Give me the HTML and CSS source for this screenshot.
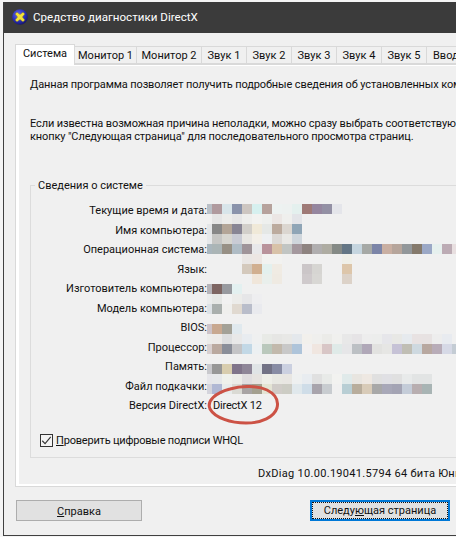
FILE: index.html
```html
<!DOCTYPE html>
<html lang="ru">
<head>
<meta charset="utf-8">
<title>Средство диагностики DirectX</title>
<link rel="stylesheet" href="styles.css">
</head>
<body>
<div class="window">
  <header class="titlebar">
    <svg class="app-icon" viewBox="0 0 16 16" width="16" height="16" aria-hidden="true">
      <defs>
        <radialGradient id="orb" cx="40%" cy="35%" r="70%">
          <stop offset="0" stop-color="#6a6ee8"/>
          <stop offset="0.6" stop-color="#2a2fb8"/>
          <stop offset="1" stop-color="#14145e"/>
        </radialGradient>
      </defs>
      <circle cx="8" cy="8" r="7.8" fill="url(#orb)"/>
      <path d="M3.2 5 5 3.2 8 5.6 11 3.2 12.8 5 10.4 8 12.8 11 11 12.8 8 10.4 5 12.8 3.2 11 5.6 8Z" fill="#f3e23a" stroke="#8a7a10" stroke-width=".4"/>
    </svg>
    <span class="title-text">Средство диагностики DirectX</span>
  </header>

  <nav class="tabs">
    <div class="tab tab-active">Система</div>
    <div class="tab tab-monitor-1">Монитор 1</div>
    <div class="tab tab-monitor-2">Монитор 2</div>
    <div class="tab tab-sound">Звук 1</div>
    <div class="tab tab-sound">Звук 2</div>
    <div class="tab tab-sound">Звук 3</div>
    <div class="tab tab-sound">Звук 4</div>
    <div class="tab tab-sound">Звук 5</div>
    <div class="tab tab-input">Ввод</div>
  </nav>

  <section class="panel">
    <div class="panel-inner">
      <p class="intro intro-first">Данная программа позволяет получить подробные сведения об установленных ком</p>
      <p class="intro intro-second">Если известна возможная причина неполадки, можно сразу выбрать соответствую<br>кнопку "Следующая страница" для последовательного просмотра страниц.</p>

      <fieldset class="group">
        <legend class="group-title">Сведения о системе</legend>
        <div class="info">
          <div class="label">Текущие время и дата:</div><div class="value"></div>
          <div class="label">Имя компьютера:</div><div class="value"></div>
          <div class="label">Операционная система:</div><div class="value"></div>
          <div class="label">Язык:</div><div class="value"></div>
          <div class="label">Изготовитель компьютера:</div><div class="value"></div>
          <div class="label">Модель компьютера:</div><div class="value"></div>
          <div class="label">BIOS:</div><div class="value"></div>
          <div class="label">Процессор:</div><div class="value"></div>
          <div class="label">Память:</div><div class="value"></div>
          <div class="label">Файл подкачки:</div><div class="value"></div>
          <div class="label">Версия DirectX:</div><div class="value">DirectX 12</div>

          <svg class="mosaic" width="249" height="190" aria-hidden="true">
            <g transform="translate(0 0)">
              <rect x="-5" fill="#b9bfc6"/><rect x="5" fill="#b09a9e"/><rect x="15" fill="#d8e5ea"/><rect x="25" fill="#8a93ab"/><rect x="35" fill="#cdc6c1"/><rect x="45" fill="#d6f0ef"/><rect x="55" fill="#b6a29c"/><rect x="65" fill="#edf2f1"/><rect x="75" fill="#edf1f0"/><rect x="85" fill="#e4f0ee"/><rect x="95" fill="#9f7a77"/><rect x="105" fill="#95869f"/><rect x="115" fill="#9390a4"/><rect x="125" fill="#e4e5ea"/>
            </g>
            <g transform="translate(0 10)">
              <rect x="5" fill="#e5e5e5"/><rect x="15" fill="#ececea"/><rect x="25" fill="#e6e6e6"/><rect x="35" fill="#eeeeec"/><rect x="45" fill="#f2f2f0"/><rect x="55" fill="#eef0ee"/><rect x="65" fill="#ebe6e4"/><rect x="75" fill="#efefed"/><rect x="85" fill="#e3e4e8"/>
            </g>
            <g transform="translate(0 20)">
              <rect x="-5" fill="#e4e6e8"/><rect x="5" fill="#878787"/><rect x="15" fill="#b3a597"/><rect x="25" fill="#888594"/><rect x="35" fill="#d2cfca"/><rect x="45" fill="#f0e9d8"/><rect x="55" fill="#e5e8e6"/><rect x="65" fill="#bcab9e"/><rect x="75" fill="#dbd6d0"/><rect x="85" fill="#8fa5b6"/>
            </g>
            <g transform="translate(0 30)">
              <rect x="-5" fill="#e6e8ea"/><rect x="5" fill="#c6c6c4"/><rect x="15" fill="#d6d5cf"/><rect x="25" fill="#c9cbd4"/><rect x="35" fill="#e8e6e2"/><rect x="45" fill="#f3efe8"/><rect x="55" fill="#eef0f2"/><rect x="65" fill="#dcd9d6"/><rect x="75" fill="#e9e8e5"/><rect x="85" fill="#cfd6dc"/>
            </g>
            <g transform="translate(0 40)">
              <rect x="-5" fill="#aab6bd"/><rect x="5" fill="#abb5b6"/><rect x="15" fill="#979085"/><rect x="25" fill="#afbcc5"/><rect x="35" fill="#9f9499"/><rect x="45" fill="#e8e8ea"/><rect x="55" fill="#b9939b"/><rect x="65" fill="#d8c2a8"/><rect x="75" fill="#c1c5c3"/><rect x="85" fill="#a4989e"/><rect x="95" fill="#8e8380"/><rect x="105" fill="#b0aeaf"/><rect x="115" fill="#aeaca2"/><rect x="125" fill="#858a86"/><rect x="135" fill="#647685"/><rect x="145" fill="#c5d5df"/><rect x="155" fill="#a6a9a6"/><rect x="165" fill="#7c85a8"/><rect x="175" fill="#c9afa2"/><rect x="185" fill="#b6a59b"/><rect x="195" fill="#92979a"/><rect x="205" fill="#857a6c"/><rect x="215" fill="#9ba8c6"/><rect x="225" fill="#e6f0ee"/><rect x="235" fill="#bcabb4"/><rect x="245" fill="#e8dfe0"/>
            </g>
            <g transform="translate(0 50)">
              <rect x="35" fill="#e9e6e4"/><rect x="45" fill="#ece6e3"/><rect x="55" fill="#f2f2f0"/><rect x="65" fill="#f2f2f0"/><rect x="135" fill="#efefe8"/>
            </g>
            <g transform="translate(0 60)">
              <rect x="35" fill="#d4c9bc"/><rect x="45" fill="#d1af90"/><rect x="55" fill="#e3f0ee"/><rect x="65" fill="#f0ebe3"/><rect x="95" fill="#cbc6c8"/><rect x="105" fill="#d6d5d2"/><rect x="135" fill="#ddc6aa"/>
            </g>
            <g transform="translate(0 70)">
              <rect x="45" fill="#f0e6da"/><rect x="55" fill="#e9efec"/><rect x="65" fill="#efeae2"/><rect x="95" fill="#cfcacc"/><rect x="105" fill="#d8d7d4"/><rect x="135" fill="#dcd2c8"/>
            </g>
            <g transform="translate(0 80)">
              <rect x="-5" fill="#b5b3b8"/><rect x="5" fill="#7d6562"/><rect x="15" fill="#989a9f"/><rect x="25" fill="#e3f0f0"/>
            </g>
            <g transform="translate(0 90)">
              <rect x="-5" fill="#eaecec"/><rect x="5" fill="#e5e7e5"/><rect x="15" fill="#f1f1f1"/><rect x="25" fill="#ececea"/><rect x="35" fill="#e6e6e8"/><rect x="45" fill="#eeeef0"/>
            </g>
            <g transform="translate(0 100)">
              <rect x="-5" fill="#dde2e6"/><rect x="5" fill="#a9afad"/><rect x="15" fill="#efefed"/><rect x="25" fill="#e0d9d0"/><rect x="35" fill="#b9bdca"/><rect x="45" fill="#e9eaee"/>
            </g>
            <g transform="translate(0 120)">
              <rect x="-5" fill="#cdc3c8"/><rect x="5" fill="#c8a890"/><rect x="15" fill="#a3a197"/><rect x="25" fill="#e0e9ee"/>
            </g>
            <g transform="translate(0 130)">
              <rect x="-5" fill="#ececea"/><rect x="5" fill="#eceae8"/><rect x="15" fill="#dddedf"/><rect x="25" fill="#e8e8e8"/><rect x="35" fill="#e8ecf0"/><rect x="45" fill="#eff0f0"/><rect x="55" fill="#e8eae6"/><rect x="65" fill="#e6e6e4"/><rect x="75" fill="#e8e8e6"/><rect x="85" fill="#e4e8ec"/><rect x="95" fill="#f2f0ec"/><rect x="105" fill="#efefed"/><rect x="115" fill="#ebebe8"/><rect x="125" fill="#f0f0ee"/><rect x="135" fill="#e8e8e8"/><rect x="145" fill="#e6e4e6"/><rect x="155" fill="#ededed"/><rect x="165" fill="#ecedec"/><rect x="175" fill="#e6e6ea"/><rect x="185" fill="#e8e8e5"/><rect x="195" fill="#e6eaee"/><rect x="205" fill="#e8e2e2"/><rect x="215" fill="#e7e2e2"/><rect x="225" fill="#ededed"/><rect x="235" fill="#e8ebf0"/>
            </g>
            <g transform="translate(0 140)">
              <rect x="-5" fill="#d8d0d0"/><rect x="5" fill="#baa99f"/><rect x="15" fill="#8a8e99"/><rect x="25" fill="#c4c4c6"/><rect x="35" fill="#c2d8e6"/><rect x="45" fill="#ecf0f2"/><rect x="55" fill="#bac8bc"/><rect x="65" fill="#c2b9ac"/><rect x="75" fill="#c8c8c8"/><rect x="85" fill="#aec4da"/><rect x="95" fill="#f2f0f0"/><rect x="105" fill="#f0e6e0"/><rect x="115" fill="#d8c6c6"/><rect x="125" fill="#dfeae8"/><rect x="135" fill="#e6e6e8"/><rect x="145" fill="#bcc0c4"/><rect x="155" fill="#b0a8b8"/><rect x="165" fill="#e2e2e0"/><rect x="175" fill="#e6e6e4"/><rect x="185" fill="#c6c2d6"/><rect x="195" fill="#c0beb4"/><rect x="205" fill="#ced9e0"/><rect x="215" fill="#b8a8a0"/><rect x="225" fill="#b8acb8"/><rect x="235" fill="#d6d9e6"/><rect x="245" fill="#c4ccd4"/>
            </g>
            <g transform="translate(0 160)">
              <rect x="-5" fill="#c8c8cc"/><rect x="5" fill="#979797"/><rect x="15" fill="#d8cdae"/><rect x="25" fill="#80748a"/><rect x="35" fill="#8f8698"/><rect x="45" fill="#e0e4e6"/><rect x="55" fill="#727285"/><rect x="65" fill="#888ca4"/><rect x="75" fill="#cbd0e0"/>
            </g>
            <g transform="translate(0 170)">
              <rect x="-5" fill="#e6e6ea"/><rect x="5" fill="#e6e8ea"/><rect x="15" fill="#eff1ec"/><rect x="25" fill="#ecece8"/><rect x="35" fill="#e0dddf"/><rect x="45" fill="#e6e3e0"/><rect x="55" fill="#eeeee8"/><rect x="65" fill="#e8e8e2"/><rect x="75" fill="#e8e6e2"/><rect x="85" fill="#eef0f0"/><rect x="95" fill="#e8ecf0"/><rect x="105" fill="#e0e0e0"/><rect x="115" fill="#e8eae8"/><rect x="125" fill="#f2f2f0"/><rect x="135" fill="#e0eaea"/><rect x="145" fill="#e8e5e0"/><rect x="155" fill="#eee8e2"/><rect x="165" fill="#e0e0e0"/><rect x="175" fill="#e0e0e4"/><rect x="185" fill="#e0e0e0"/><rect x="195" fill="#e8eaea"/><rect x="205" fill="#e2e4e4"/><rect x="215" fill="#e2e4e4"/>
            </g>
            <g transform="translate(0 180)">
              <rect x="-5" fill="#d4d4dc"/><rect x="5" fill="#b0b8d4"/><rect x="15" fill="#e8ecec"/><rect x="25" fill="#dadad4"/><rect x="35" fill="#a8a4a4"/><rect x="45" fill="#a4a090"/><rect x="55" fill="#e4e4d4"/><rect x="65" fill="#d0ccc8"/><rect x="75" fill="#ccccc4"/><rect x="85" fill="#e0e8ec"/><rect x="95" fill="#cfdde8"/><rect x="105" fill="#a8a4ac"/><rect x="115" fill="#c8ccd0"/><rect x="125" fill="#f0f0f0"/><rect x="135" fill="#b8ced4"/><rect x="145" fill="#b8ad9c"/><rect x="155" fill="#d8cbb8"/><rect x="165" fill="#a8a8a8"/><rect x="175" fill="#a8a8b8"/><rect x="185" fill="#a4a4b4"/><rect x="195" fill="#c4ccd8"/><rect x="205" fill="#b8aeb0"/><rect x="215" fill="#a8b4b4"/>
            </g>
          </svg>

          <svg class="circle-mark" width="74" height="42" viewBox="0 0 74 42" aria-hidden="true">
            <path d="M24 4C36 0.5 52 0.5 61 5 69 9 73 15 71 23 68 32 56 38 40 38 25 38 9 33 4 24 0.5 16 9 8 24 4Z" fill="none" stroke="#cc5245" stroke-width="3" stroke-linecap="round"/>
          </svg>
        </div>

        <label class="check-row">
          <span class="check-box">
            <svg viewBox="0 0 13 13" width="11" height="11" aria-hidden="true"><path d="M1.5 6.8 4.8 10.2 11.5 2.2" fill="none" stroke="#333" stroke-width="1.3"/></svg>
          </span>
          <span><u>П</u>роверить цифровые подписи WHQL</span>
        </label>
      </fieldset>

      <div class="version">DxDiag 10.00.19041.5794 64 бита Юник</div>
    </div>
  </section>

  <footer class="buttons">
    <button class="btn btn-help" type="button"><u>С</u>правка</button>
    <button class="btn btn-next" type="button"><span class="btn-focus">Следу<u>ю</u>щая страница</span></button>
  </footer>
</div>
</body>
</html>
```

FILE: styles.css
```css
* { box-sizing: border-box; }

html, body {
  margin: 0;
  height: 100%;
  overflow: hidden;
  background: #f4f4f4;
}

body {
  font-family: Roboto, "Noto Sans", sans-serif;
  font-size: 11px;
  line-height: 13px;
  color: #111;
}

.window {
  width: 453px;
  height: 534px;
  margin: 2px 0 0 3px;
  border-left: 1px solid #404040;
  border-bottom: 1px solid #404040;
  background: #f0f0f0;
  overflow: hidden;
}

.titlebar {
  display: flex;
  align-items: center;
  height: 31px;
  padding: 0 0 1px 8px;
  background: #3b3b3b;
  color: #fff;
}

.app-icon { flex: none; }

.title-text {
  margin-left: 5px;
  font-size: 11.6px;
  white-space: nowrap;
}

.tabs {
  display: flex;
  height: 20px;
  margin: 11px 0 0 11px;
  position: relative;
  z-index: 1;
  white-space: nowrap;
}

.tab {
  flex: none;
  height: 18px;
  margin-top: 2px;
  border: 1px solid #d9d9d9;
  border-left-width: 0;
  background: #f0f0f0;
  text-align: center;
  line-height: 17px;
}

.tab-active {
  width: 60px;
  height: 21px;
  margin-top: 0;
  border-left-width: 1px;
  border-bottom: 0;
  background: #fff;
  line-height: 18px;
}

.tab-monitor-1 { width: 62px; }
.tab-monitor-2 { width: 65px; }
.tab-sound { width: 45px; }
.tab-input { width: 45px; text-align: left; padding-left: 6px; }

.panel {
  width: 450px;
  height: 423px;
  margin-left: 11px;
  border: 1px solid #d9d9d9;
}

.panel-inner {
  height: 100%;
  border: solid #fff;
  border-width: 1px 0 2px 3px;
  background: #f0f0f0;
  white-space: nowrap;
}

.intro {
  margin: 0 0 0 11px;
  letter-spacing: -0.12px;
}

.intro-first { padding-top: 12px; }
.intro-second { margin-top: 26px; }

.group {
  width: 500px;
  margin: 35px 0 0 11px;
  padding: 0 0 10px;
  border: 1px solid #dcdcdc;
  min-width: 0;
}

.group-title {
  margin-left: 4px;
  padding: 1px 3px 0;
}

.info {
  position: relative;
  display: grid;
  grid-template-columns: 176px 1fr;
  grid-auto-rows: 19.5px;
  margin-top: 9px;
  align-items: center;
}

.label { text-align: right; }

.value {
  padding-left: 6px;
  letter-spacing: -0.2px;
}

.mosaic {
  position: absolute;
  left: 176px;
  top: 3px;
}

.mosaic rect { width: 10px; height: 10px; }

.circle-mark {
  position: absolute;
  left: 175px;
  top: 184px;
}

.check-row {
  display: flex;
  align-items: center;
  gap: 3px;
  margin: 18px 0 0 9px;
  letter-spacing: -0.2px;
}

.check-box {
  display: flex;
  align-items: center;
  justify-content: center;
  width: 13px;
  height: 13px;
  border: 1px solid #333;
  background: #f4f4f4;
}

.version {
  margin: 9px 0 0 239px;
  letter-spacing: 0.3px;
}

.buttons {
  display: flex;
  gap: 168px;
  margin: 13px 0 0 12px;
}

.btn {
  display: block;
  height: 21px;
  padding: 1px 0 0;
  font: inherit;
  color: inherit;
  background: #e1e1e1;
}

.btn-help {
  width: 126px;
  border: 1px solid #adadad;
}

.btn-next {
  width: 140px;
  padding: 0;
  border: 2px solid #0078d7;
}

.btn-focus {
  display: block;
  height: 100%;
  border: 1px dotted #111;
  line-height: 14px;
  padding-top: 1px;
}
```
